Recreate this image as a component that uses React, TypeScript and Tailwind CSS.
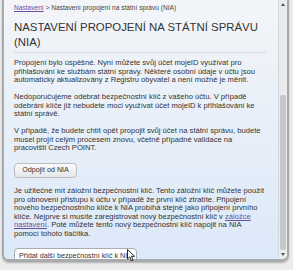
import React from 'react';

const body = "text-[7.6px] leading-[8.5px] text-[#333]";
const link = "text-[#6b4fa0] underline";

function Cursor() {
  return (
    <svg className="absolute left-[127px] top-[249px]" width="9" height="13" viewBox="0 0 9 13">
      <path d="M0.5 0.5 L0.5 10 L2.8 7.9 L4.4 11.8 L6 11.1 L4.5 7.3 L7.6 7.3 Z" fill="#fff" stroke="#111" strokeWidth="0.9" strokeLinejoin="round" />
    </svg>
  );
}

function Scrollbar() {
  return (
    <div className="flex w-[9px] flex-col bg-[#e9ebee] border-l border-[#d4d7db]">
      <div className="flex h-[9px] items-center justify-center">
        <div className="h-0 w-0 border-x-[2.5px] border-b-[3px] border-x-transparent border-b-[#555]" />
      </div>
      <div className="h-[86px]" />
      <div className="flex-1 rounded-[2px] bg-[#c6c8cb] mx-[1px]" />
      <div className="flex h-[9px] items-center justify-center">
        <div className="h-0 w-0 border-x-[2.5px] border-t-[3px] border-x-transparent border-t-[#555]" />
      </div>
    </div>
  );
}

export default function App() {
  return (
    <div className="relative h-[270px] w-[293px] overflow-hidden bg-[#ececec]" style={{ fontFamily: '"Liberation Sans", Arial, sans-serif' }}>
      <div className="ml-[2px] mr-[4px] flex h-[262px] rounded-b-[7px] border-x-2 border-b-[3px] border-[#a8aaad] shadow-[0_1px_2px_rgba(0,0,0,0.25)] overflow-hidden">
        <div className="flex-1 overflow-hidden bg-gradient-to-b from-[#f3f5f8] to-[#dce9f9] pl-[10px] pt-[4px]">
          <div className="w-[252px]">
            <div className="text-[6.6px] leading-[8px] text-[#444]">
              <a className={link}>Nastavení</a> &gt; Nastavení propojení na státní správu (NIA)
            </div>
            <h1 className="mt-[7.5px] text-[11.4px] leading-[15px] font-normal text-[#333]">
              NASTAVENÍ PROPOJENÍ NA STÁTNÍ SPRÁVU (NIA)
            </h1>
            <div className="mt-[2.5px] h-px bg-[#d9dde2]" />

            <p className={`mt-[6px] ${body}`}>
              Propojení bylo úspěšné. Nyní můžete svůj účet mojeID využívat pro přihlašování ke službám státní správy. Některé osobní údaje v účtu jsou automaticky aktualizovány z Registru obyvatel a není možné je měnit.
            </p>
            <p className={`mt-[8.5px] ${body}`}>
              Nedoporučujeme odebrat bezpečnostní klíč z vašeho účtu. V případě odebrání klíče již nebudete moci využívat účet mojeID k přihlašování ke státní správě.
            </p>
            <p className={`mt-[8.5px] ${body}`}>
              V případě, že budete chtít opět propojit svůj účet na státní správu, budete musel projít celým procesem znovu, včetně případné validace na pracovišti Czech POINT.
            </p>
            <button className="mt-[10px] h-[15px] w-[63px] rounded-[4px] border border-[#b9bcc0] bg-gradient-to-b from-[#fbfbfb] to-[#e6e7e9] text-[7.2px] text-[#333]">
              Odpojit od NIA
            </button>
            <p className={`mt-[8.5px] ${body}`}>
              Je užitečné mít záložní bezpečnostní klíč. Tento záložní klíč můžete použít pro obnovení přístupu k účtu v případě že první klíč ztratíte. Připojení nového bezpečnostního klíče k NIA probíhá stejně jako připojení prvního klíče. Nejprve si musíte zaregistrovat nový bezpečnostní klíč v <a className={link}>záložce nastavení</a>. Poté můžete tento nový bezpečnostní klíč napojit na NIA pomocí tohoto tlačítka.
            </p>
            <button className="mt-[10px] h-[16px] rounded-[4px] border border-[#a9acb0] bg-white px-[4px] text-[7.2px] text-[#333]">
              Přidat další bezpečnostní klíč k NIA
            </button>
          </div>
        </div>
        <Scrollbar />
      </div>
      <Cursor />
    </div>
  );
}
